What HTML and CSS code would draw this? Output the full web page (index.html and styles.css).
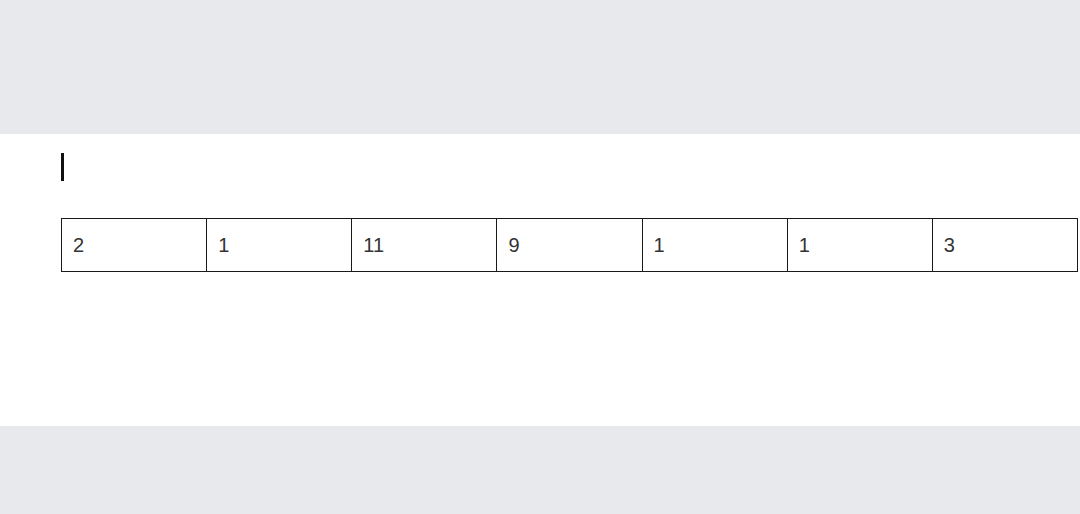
FILE: index.html
```html
<!DOCTYPE html>
<html>
<head>
<meta charset="utf-8">
<link rel="stylesheet" href="styles.css">
</head>
<body>
<div class="band band-top"></div>
<main class="sheet">
  <div class="caret"></div>
  <table class="grid">
    <tr>
      <td>2</td>
      <td>1</td>
      <td>11</td>
      <td>9</td>
      <td>1</td>
      <td>1</td>
      <td>3</td>
    </tr>
  </table>
</main>
<div class="band band-bottom"></div>
</body>
</html>
```
FILE: styles.css
```css
html, body {
  margin: 0;
  padding: 0;
  background: #e8e9ed;
  font-family: "Liberation Sans", Arial, sans-serif;
}
.band-top {
  height: 134px;
}
.band-bottom {
  height: 88px;
}
.sheet {
  background: #ffffff;
  height: 292px;
  padding: 19px 0 0 61px;
  box-sizing: border-box;
}
.caret {
  width: 3px;
  height: 28px;
  background: #111;
}
.grid {
  margin-top: 37px;
  border-collapse: collapse;
  table-layout: fixed;
  width: 1017px;
}
.grid td {
  border: 1px solid #1a1a1a;
  height: 53px;
  padding: 0 0 0 11px;
  font-size: 20px;
  color: #333;
  vertical-align: middle;
  box-sizing: border-box;
}
```
